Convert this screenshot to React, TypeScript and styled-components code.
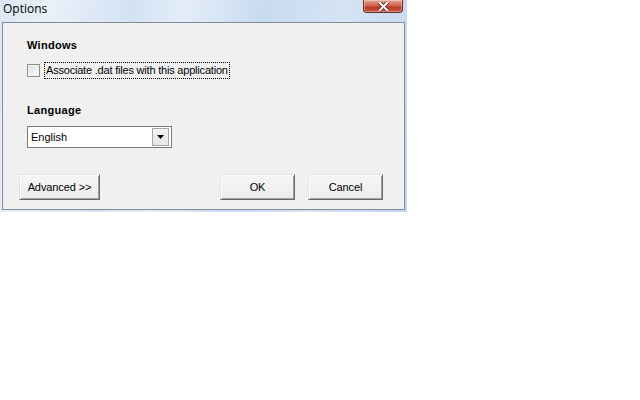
import styled, { createGlobalStyle } from 'styled-components'

const GlobalStyle = createGlobalStyle`
  body {
    margin: 0;
    background: #ffffff;
  }
`

const Window = styled.div`
  width: 407px;
  padding: 0 2px 2px 2px;
  box-sizing: border-box;
  background: linear-gradient(
    100deg,
    #dce7f4 0%,
    #e9f0f9 12%,
    #d3e2f3 30%,
    #e4edf8 42%,
    #c7dbf0 60%,
    #d6e4f4 78%,
    #bfd5ee 100%
  );
`

const TitleBar = styled.div`
  height: 22px;
  display: flex;
  justify-content: space-between;
  align-items: flex-start;
  padding: 0 2px 0 1px;
`

const Title = styled.span`
  font-family: 'Open Sans', 'Noto Sans', sans-serif;
  font-size: 12px;
  line-height: 17px;
  color: #000;
`

const CloseButton = styled.div`
  width: 40px;
  height: 13px;
  box-sizing: border-box;
  border: 1px solid #6b2d25;
  border-top: none;
  border-radius: 0 0 4px 4px;
  background: linear-gradient(180deg, #e8a493 0%, #d0634f 45%, #bb3b24 60%, #c8553c 100%);
  box-shadow: inset 0 0 0 1px rgba(255, 255, 255, 0.35);
  display: flex;
  justify-content: center;
  align-items: flex-end;
`

const Client = styled.div`
  background: #f0f0f0;
  border: 1px solid #838d9a;
  padding: 16px 0 9px 0;
  font-family: 'Liberation Sans', Arial, sans-serif;
  font-size: 11px;
  color: #000;
`

const Section = styled.div`
  padding: 0 24px;
`

const Heading = styled.div`
  font-weight: bold;
  line-height: 13px;
  letter-spacing: 0.3px;
`

const CheckRow = styled.label`
  display: flex;
  align-items: center;
  gap: 4px;
  margin-top: 10px;
  margin-bottom: 25px;
`

const CheckBox = styled.span`
  width: 13px;
  height: 13px;
  box-sizing: border-box;
  border: 1px solid #8e8f8f;
  background: linear-gradient(135deg, #d9d9d9 0%, #eeeeee 50%, #ffffff 100%);
  box-shadow: inset 0 0 0 1px #f4f4f4;
`

const FocusLabel = styled.span`
  border: 1px dotted #000;
  padding: 0 1px;
  line-height: 15px;
  letter-spacing: -0.2px;
`

const Combo = styled.div`
  margin-top: 9px;
  width: 145px;
  height: 22px;
  box-sizing: border-box;
  border: 1px solid #7a7a7a;
  background: #fff;
  display: flex;
  align-items: center;
  justify-content: space-between;
  padding: 0 2px 0 3px;
`

const ComboText = styled.span`
  line-height: 14px;
`

const DropButton = styled.span`
  width: 17px;
  height: 18px;
  box-sizing: border-box;
  border: 1px solid #a7a7a7;
  background: linear-gradient(180deg, #f4f4f4 0%, #e6e6e6 100%);
  display: flex;
  justify-content: center;
  align-items: center;
`

const ButtonRow = styled.div`
  margin-top: 26px;
  padding: 0 21px 0 16px;
  display: flex;
  justify-content: space-between;
`

const ButtonGroup = styled.div`
  display: flex;
  gap: 13px;
`

const Button = styled.button<{ $width: number }>`
  width: ${(p) => p.$width}px;
  height: 26px;
  box-sizing: border-box;
  margin: 0;
  padding: 0;
  font-family: 'Liberation Sans', Arial, sans-serif;
  font-size: 11px;
  color: #000;
  background: linear-gradient(180deg, #f5f5f5 0%, #ededed 100%);
  border: 1px solid;
  border-color: #e3e3e3 #696969 #696969 #e3e3e3;
  box-shadow: inset 1px 1px 0 #ffffff, inset -1px -1px 0 #a0a0a0;
  letter-spacing: -0.1px;
`

const CloseGlyph = () => (
  <svg width="13" height="10" viewBox="0 0 13 10">
    <path d="M2 0 L11 9 M11 0 L2 9" fill="none" stroke="#5a2a22" strokeWidth="3.6" />
    <path d="M2 0 L11 9 M11 0 L2 9" fill="none" stroke="#ffffff" strokeWidth="2" />
  </svg>
)

const ArrowGlyph = () => (
  <svg width="7" height="4" viewBox="0 0 7 4">
    <path d="M0 0 H7 L3.5 4 Z" fill="#000" />
  </svg>
)

export default function App() {
  return (
    <>
      <GlobalStyle />
      <Window>
        <TitleBar>
          <Title>Options</Title>
          <CloseButton>
            <CloseGlyph />
          </CloseButton>
        </TitleBar>
        <Client>
          <Section>
            <Heading>Windows</Heading>
            <CheckRow>
              <CheckBox />
              <FocusLabel>Associate .dat files with this application</FocusLabel>
            </CheckRow>
            <Heading>Language</Heading>
            <Combo>
              <ComboText>English</ComboText>
              <DropButton>
                <ArrowGlyph />
              </DropButton>
            </Combo>
          </Section>
          <ButtonRow>
            <Button $width={81}>Advanced &gt;&gt;</Button>
            <ButtonGroup>
              <Button $width={75}>OK</Button>
              <Button $width={75}>Cancel</Button>
            </ButtonGroup>
          </ButtonRow>
        </Client>
      </Window>
    </>
  )
}
